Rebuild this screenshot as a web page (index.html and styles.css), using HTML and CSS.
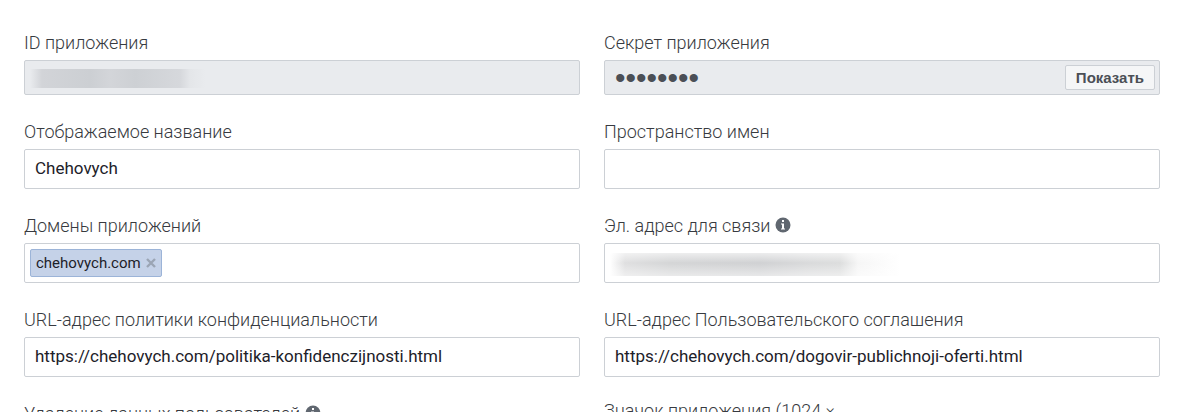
FILE: index.html
```
<!DOCTYPE html>
<html lang="ru">
<head>
    <meta charset="UTF-8">
    <meta name="viewport" content="width=device-width, initial-scale=1.0">
    <title>Настройки приложения</title>
    <link rel="stylesheet" href="styles.css">
</head>

<body>
    <form class="settings">
        <div class="field">
            <label for="app-id">ID приложения</label>
            <div class="control">
                <input type="text" id="app-id" class="readonly" readonly>
                <span class="hidden-value hidden-id"></span>
            </div>
        </div>
        <div class="field">
            <label for="app-secret">Секрет приложения</label>
            <div class="control">
                <input type="password" id="app-secret" class="readonly secret" value="12345678" readonly>
                <button type="button" class="show-btn">Показать</button>
            </div>
        </div>

        <div class="field">
            <label for="display-name">Отображаемое название</label>
            <input type="text" id="display-name" value="Chehovych">
        </div>
        <div class="field">
            <label for="namespace">Пространство имен</label>
            <input type="text" id="namespace">
        </div>

        <div class="field">
            <label for="domains">Домены приложений</label>
            <div class="tokens">
                <span class="token">chehovych.com
                    <button type="button" class="token-remove" aria-label="Удалить">
                        <svg width="10" height="10" viewBox="0 0 10 10"><path d="M1 1l8 8M9 1l-8 8" stroke="#9ba5b4" stroke-width="2.4" fill="none"/></svg>
                    </button>
                </span>
                <input type="text" id="domains">
            </div>
        </div>
        <div class="field">
            <div class="label-row">
                <label for="email">Эл. адрес для связи</label>
                <svg class="info" width="16" height="16" viewBox="0 0 16 16"><circle cx="8" cy="8" r="7.5" fill="#606770"/><path d="M7 3h2v2H7zM6 6.500h3v5h1v1H6v-1h1v-4H6z" fill="#fff"/></svg>
            </div>
            <div class="control">
                <input type="email" id="email">
                <span class="hidden-value hidden-email"></span>
            </div>
        </div>

        <div class="field">
            <label for="privacy-url">URL-адрес политики конфиденциальности</label>
            <input type="text" id="privacy-url" value="https://chehovych.com/politika-konfidenczijnosti.html">
        </div>
        <div class="field">
            <label for="terms-url">URL-адрес Пользовательского соглашения</label>
            <input type="text" id="terms-url" value="https://chehovych.com/dogovir-publichnoji-oferti.html">
        </div>

        <div class="field">
            <div class="label-row">
                <span class="label">Удаление данных пользователей</span>
                <svg class="info" width="16" height="16" viewBox="0 0 16 16"><circle cx="8" cy="8" r="7.5" fill="#606770"/><path d="M7 3h2v2H7zM6 6.500h3v5h1v1H6v-1h1v-4H6z" fill="#fff"/></svg>
            </div>
        </div>
        <div class="field">
            <span class="label label-tight">Значок приложения (1024 ×</span>
        </div>
    </form>
</body>
</html>
```
FILE: styles.css
```
* {
    box-sizing: border-box;
}

body {
    margin: 0;
    background: #fff;
    font-family: Roboto, "Liberation Sans", sans-serif;
    color: #373a40;
    overflow: hidden;
}

.settings {
    display: grid;
    grid-template-columns: 1fr 1fr;
    gap: 25px 24px;
    padding: 31px 30px 0 24px;
}

label,
.label {
    display: block;
    margin-bottom: 5px;
    font-size: 18px;
    font-weight: 300;
    line-height: 24px;
}

.label-tight {
    line-height: 18px;
}

.label-row {
    display: flex;
    gap: 5px;
}

.info {
    margin-top: 3px;
}

input {
    display: block;
    width: 100%;
    height: 40px;
    padding: 0 10px 3px;
    border: 1px solid #ccd0d5;
    border-radius: 2px;
    background: #fff;
    font-family: Roboto, "Liberation Sans", sans-serif;
    font-size: 17px;
    color: #1d2129;
}

.readonly {
    height: 35px;
    background: #e9ebee;
    color: #4b4f56;
}

.secret {
    padding-bottom: 0;
    font-family: "Liberation Sans", Arial, sans-serif;
    font-size: 30px;
}

.control {
    position: relative;
}

.show-btn {
    position: absolute;
    top: 5px;
    right: 5px;
    height: 25px;
    padding: 0 10px;
    border: 1px solid #ccd0d5;
    border-radius: 2px;
    background: #f5f6f7;
    font-family: "Liberation Sans", Arial, sans-serif;
    font-size: 15px;
    font-weight: bold;
    line-height: 20px;
    color: #4b4f56;
    cursor: pointer;
}

/* Smudge drawn over a private value */
.hidden-value {
    position: absolute;
    left: 6px;
}

.hidden-id {
    top: 9px;
    width: 176px;
    height: 19px;
    background: linear-gradient(90deg, #e9ebee, #d2d4d8 12px, #cccfd3 60px, #d3d5d9 80px, #cdd0d4 105px, #d6d8dc 150px, #e4e6e9 160px, #e9ebee);
}

.hidden-email {
    top: 10px;
    width: 290px;
    height: 23px;
    background:
        linear-gradient(180deg, rgba(255, 255, 255, 0.6), rgba(255, 255, 255, 0) 10px, rgba(255, 255, 255, 0.5)),
        linear-gradient(90deg, #fff, #dfdfe0 15px, #d4d5d6 60px, #d0d1d3 150px, #d9dadb 200px, #dcdddd 230px, #f6f6f6 248px, #fff);
}

.tokens {
    display: flex;
    align-items: center;
    height: 40px;
    padding: 0 5px;
    border: 1px solid #ccd0d5;
    border-radius: 2px;
}

.tokens input {
    flex: 1;
    width: auto;
    height: 30px;
    border: none;
}

.token {
    display: flex;
    align-items: center;
    gap: 5px;
    height: 28px;
    padding: 0 5px;
    border: 1px solid #9cb4d8;
    border-radius: 2px;
    background: #c5d2e8;
    font-size: 15px;
    color: #1d2129;
}

.token-remove {
    display: flex;
    padding: 0;
    border: none;
    background: none;
    cursor: pointer;
}
```
